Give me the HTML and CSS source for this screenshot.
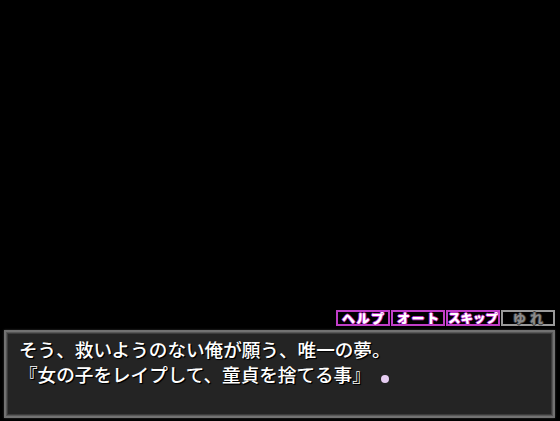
FILE: index.html
```html
<!DOCTYPE html>
<html lang="ja">
<head>
<meta charset="utf-8">
<link rel="stylesheet" href="styles.css">
</head>
<body>
<div class="screen">
  <div class="buttons">
    <div class="btn">ヘルプ</div>
    <div class="btn">オート</div>
    <div class="btn tight">スキップ</div>
    <div class="btn off">ゆれ</div>
  </div>
  <div class="dialog">
    <p class="line">そう、救いようのない俺が願う、唯一の夢。</p>
    <p class="line">『女の子をレイプして、童貞を捨てる事』<span class="dot"></span></p>
  </div>
</div>
</body>
</html>
```
FILE: styles.css
```css
html, body {
  margin: 0;
  padding: 0;
  background: #000;
}
.screen {
  width: 560px;
  height: 421px;
  display: flex;
  flex-direction: column;
  justify-content: flex-end;
  overflow: hidden;
  font-family: "Noto Sans CJK JP", "Noto Sans", sans-serif;
}
.buttons {
  display: flex;
  justify-content: flex-end;
  gap: 1px;
  padding-right: 5px;
  margin-bottom: 4px;
}
.btn {
  box-sizing: border-box;
  width: 54px;
  height: 16px;
  border: 2px solid #c13ec8;
  background: #000;
  color: #fff;
  font-size: 13px;
  font-weight: 900;
  line-height: 12px;
  text-align: center;
  white-space: nowrap;
  letter-spacing: 1.5px;
  text-indent: 1.5px;
  text-shadow: 0 0 1px #e040e0, 1px 0 0 #b030b8, -1px 0 0 #b030b8, 0 1px 0 #b030b8, 0 -1px 0 #b030b8;
}
.btn.tight {
  font-size: 12.5px;
  letter-spacing: 0;
  text-indent: 0;
}
.btn.off {
  border-color: #9a9a9a;
  color: #8a8a8a;
  letter-spacing: 4px;
  text-indent: 4px;
  text-shadow: 1px 0 0 #333, -1px 0 0 #333, 0 1px 0 #333, 0 -1px 0 #333;
}
.dialog {
  margin: 0 5px 3px 4px;
  height: 80px;
  padding: 4px 13px 0 13px;
  border: 2px solid #727272;
  background: #242424;
  box-shadow: inset 0 0 0 1px #575757, inset 0 0 0 2px #3c3c3c, 0 0 2px #3a3a3a;
}
.line {
  margin: 0;
  color: #fff;
  font-size: 18.6px;
  font-weight: 500;
  line-height: 25px;
  white-space: nowrap;
  text-shadow: 1px 1px 1px #000, 1px 1px 0 #000;
}
.dot {
  display: inline-block;
  width: 8px;
  height: 8px;
  border-radius: 50%;
  background: #e6cdf2;
  margin-left: 10px;
  vertical-align: -1px;
}
```
